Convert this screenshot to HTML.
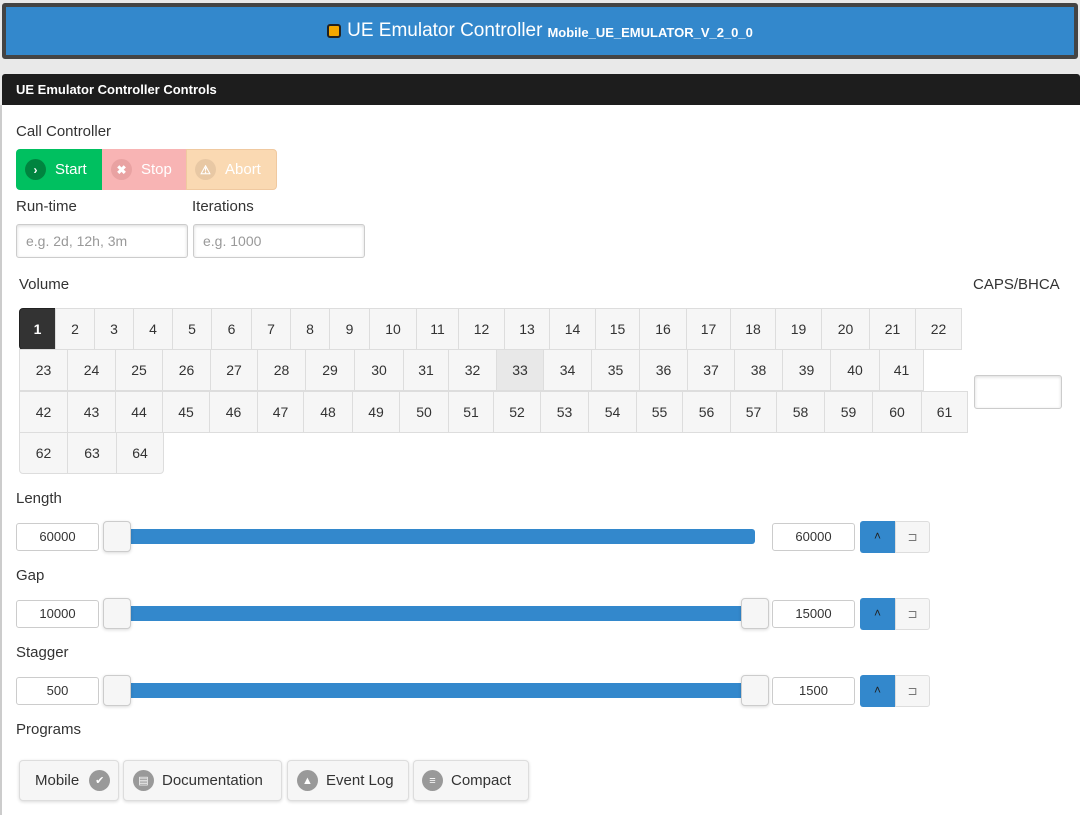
<!DOCTYPE html>
<html><head><meta charset="utf-8"><style>
*{box-sizing:border-box;margin:0;padding:0}
body{width:1080px;height:815px;overflow:hidden;background:#e9e9e9;font-family:"Liberation Sans",sans-serif;color:#333;position:relative}
.a{position:absolute}
.hdr{left:2px;top:3px;width:1076px;height:56px;background:#3388cc;border:4px solid #444;border-radius:3px;color:#fff;display:flex;align-items:center;justify-content:center;font-size:19px}
.hdr small{font-size:13px;font-weight:bold;margin-left:5px;margin-top:3px}
.sq{display:inline-block;width:14px;height:14px;background:#f5a800;border:2px solid #222;border-radius:3px;margin-right:6px}
.ph{left:2px;top:74px;width:1078px;height:31px;background:#1d1d1d;border-radius:3px 3px 0 0;color:#fff;font-weight:bold;font-size:13px;line-height:31px;padding-left:14px}
.body{left:2px;top:105px;width:1078px;height:710px;background:#fff}
.lbl{font-size:15px;color:#333}
.in{background:#fff;border:1px solid #ccc;border-radius:3px;box-shadow:inset 0 1px 3px rgba(0,0,0,.15);font-size:14px;color:#999;padding-left:9px;line-height:32px}
.cb{font-size:15px;color:#fff;height:41px;top:149px;display:flex;align-items:center}
.ic{display:flex;align-items:center;justify-content:center;width:21px;height:21px;border-radius:50%;font-size:12px;font-weight:bold;margin-right:9px}
.c{position:absolute;background:#f6f6f6;border:1px solid #ddd;font-size:14px;text-align:center;height:42px;line-height:40px;color:#333}
.num{background:#fff;border:1px solid #ccc;border-radius:3px;text-align:center;font-size:13px;height:28px;line-height:26px;color:#333}
.th{width:28px;height:31px;background:#f6f6f6;border:1px solid #ccc;border-radius:4px;box-shadow:0 1px 3px rgba(0,0,0,.15)}
.tr{height:15px;background:#3388cc;border-radius:3px}
.b1{width:35px;height:32px;background:#3388cc;border-radius:3px 0 0 3px;color:#222;text-align:center;line-height:30px;font-size:12px}
.b2{width:35px;height:32px;background:#f6f6f6;border:1px solid #ddd;border-radius:0 3px 3px 0;color:#777;text-align:center;line-height:30px;font-size:12px}
.pb{top:760px;height:41px;background:#f6f6f6;border:1px solid #ddd;border-radius:4px;box-shadow:0 1px 3px rgba(0,0,0,.15);font-size:15px;color:#333;display:flex;align-items:center}
.gi{display:flex;align-items:center;justify-content:center;width:21px;height:21px;border-radius:50%;background:#999;color:#fff;font-size:11px;margin-right:8px}
</style></head><body>
<div class="a hdr"><span class="sq"></span>UE Emulator Controller <small>Mobile_UE_EMULATOR_V_2_0_0</small></div>
<div class="a ph">UE Emulator Controller Controls</div>
<div class="a body"></div>
<div class="a" style="left:0;top:105px;width:2px;height:710px;background:#ccc"></div>
<div class="a lbl" style="left:16px;top:123px">Call Controller</div>
<div class="a cb" style="left:16px;width:86px;background:#00c060;border-radius:4px 0 0 4px;padding-left:9px"><span class="ic" style="background:#00843f">&#x203A;</span>Start</div>
<div class="a cb" style="left:102px;width:84px;background:#f8b4b4;padding-left:9px"><span class="ic" style="background:#e9a2a2">&#x2716;</span>Stop</div>
<div class="a cb" style="left:186px;width:91px;background:#fad9b2;border:1px solid #f0c9a0;border-radius:0 4px 4px 0;padding-left:8px"><span class="ic" style="background:#e8c8a4">&#x26A0;</span>Abort</div>
<div class="a lbl" style="left:16px;top:198px">Run-time</div>
<div class="a lbl" style="left:192px;top:198px">Iterations</div>
<div class="a in" style="left:16px;top:224px;width:172px;height:34px">e.g. 2d, 12h, 3m</div>
<div class="a in" style="left:193px;top:224px;width:172px;height:34px">e.g. 1000</div>
<div class="a lbl" style="left:19px;top:276px">Volume</div>
<div class="a lbl" style="left:973px;top:276px">CAPS/BHCA</div>
<div class="a in" style="left:974px;top:375px;width:88px;height:34px"></div>
<div class="a lbl" style="left:16px;top:490px">Length</div>
<div class="a lbl" style="left:16px;top:567px">Gap</div>
<div class="a lbl" style="left:16px;top:644px">Stagger</div>
<div class="a lbl" style="left:16px;top:721px">Programs</div>

<div class="a num" style="left:16px;top:523px;width:83px">60000</div>
<div class="a tr" style="left:128px;top:529px;width:627px"></div>
<div class="a th" style="left:103px;top:521px"></div>
<div class="a num" style="left:772px;top:523px;width:83px">60000</div>
<div class="a b1" style="left:860px;top:521px">&#x2C4;</div><div class="a b2" style="left:895px;top:521px">&#x2290;</div>

<div class="a num" style="left:16px;top:600px;width:83px">10000</div>
<div class="a tr" style="left:128px;top:606px;width:620px"></div>
<div class="a th" style="left:103px;top:598px"></div>
<div class="a th" style="left:741px;top:598px"></div>
<div class="a num" style="left:772px;top:600px;width:83px">15000</div>
<div class="a b1" style="left:860px;top:598px">&#x2C4;</div><div class="a b2" style="left:895px;top:598px">&#x2290;</div>

<div class="a num" style="left:16px;top:677px;width:83px">500</div>
<div class="a tr" style="left:128px;top:683px;width:620px"></div>
<div class="a th" style="left:103px;top:675px"></div>
<div class="a th" style="left:741px;top:675px"></div>
<div class="a num" style="left:772px;top:677px;width:83px">1500</div>
<div class="a b1" style="left:860px;top:675px">&#x2C4;</div><div class="a b2" style="left:895px;top:675px">&#x2290;</div>

<div class="a pb" style="left:19px;width:100px;padding-left:15px">Mobile <span class="gi" style="margin-left:10px;margin-right:0">&#x2714;</span></div>
<div class="a pb" style="left:123px;width:159px;padding-left:9px"><span class="gi">&#x25A4;</span>Documentation</div>
<div class="a pb" style="left:287px;width:122px;padding-left:9px"><span class="gi">&#x25B2;</span>Event Log</div>
<div class="a pb" style="left:413px;width:116px;padding-left:8px"><span class="gi">&#x2261;</span>Compact</div>

<div class="c" style="left:19px;top:308px;width:37px;background:#333;color:#fff;border-color:#222;border-radius:4px 0 0 4px;font-weight:bold">1</div>
<div class="c" style="left:55px;top:308px;width:40px">2</div>
<div class="c" style="left:94px;top:308px;width:40px">3</div>
<div class="c" style="left:133px;top:308px;width:40px">4</div>
<div class="c" style="left:172px;top:308px;width:40px">5</div>
<div class="c" style="left:211px;top:308px;width:41px">6</div>
<div class="c" style="left:251px;top:308px;width:40px">7</div>
<div class="c" style="left:290px;top:308px;width:40px">8</div>
<div class="c" style="left:329px;top:308px;width:41px">9</div>
<div class="c" style="left:369px;top:308px;width:48px">10</div>
<div class="c" style="left:416px;top:308px;width:43px">11</div>
<div class="c" style="left:458px;top:308px;width:47px">12</div>
<div class="c" style="left:504px;top:308px;width:46px">13</div>
<div class="c" style="left:549px;top:308px;width:47px">14</div>
<div class="c" style="left:595px;top:308px;width:45px">15</div>
<div class="c" style="left:639px;top:308px;width:48px">16</div>
<div class="c" style="left:686px;top:308px;width:45px">17</div>
<div class="c" style="left:730px;top:308px;width:46px">18</div>
<div class="c" style="left:775px;top:308px;width:47px">19</div>
<div class="c" style="left:821px;top:308px;width:49px">20</div>
<div class="c" style="left:869px;top:308px;width:47px">21</div>
<div class="c" style="left:915px;top:308px;width:47px">22</div>

<div class="c" style="left:19px;top:349px;width:49px">23</div>
<div class="c" style="left:67px;top:349px;width:49px">24</div>
<div class="c" style="left:115px;top:349px;width:48px">25</div>
<div class="c" style="left:162px;top:349px;width:49px">26</div>
<div class="c" style="left:210px;top:349px;width:48px">27</div>
<div class="c" style="left:257px;top:349px;width:49px">28</div>
<div class="c" style="left:305px;top:349px;width:50px">29</div>
<div class="c" style="left:354px;top:349px;width:50px">30</div>
<div class="c" style="left:403px;top:349px;width:46px">31</div>
<div class="c" style="left:448px;top:349px;width:49px">32</div>
<div class="c" style="left:496px;top:349px;width:48px;background:#e8e8e8">33</div>
<div class="c" style="left:543px;top:349px;width:49px">34</div>
<div class="c" style="left:591px;top:349px;width:49px">35</div>
<div class="c" style="left:639px;top:349px;width:49px">36</div>
<div class="c" style="left:687px;top:349px;width:48px">37</div>
<div class="c" style="left:734px;top:349px;width:49px">38</div>
<div class="c" style="left:782px;top:349px;width:49px">39</div>
<div class="c" style="left:830px;top:349px;width:50px">40</div>
<div class="c" style="left:879px;top:349px;width:45px">41</div>

<div class="c" style="left:19px;top:391px;width:49px">42</div>
<div class="c" style="left:67px;top:391px;width:49px">43</div>
<div class="c" style="left:115px;top:391px;width:48px">44</div>
<div class="c" style="left:162px;top:391px;width:48px">45</div>
<div class="c" style="left:209px;top:391px;width:49px">46</div>
<div class="c" style="left:257px;top:391px;width:47px">47</div>
<div class="c" style="left:303px;top:391px;width:50px">48</div>
<div class="c" style="left:352px;top:391px;width:48px">49</div>
<div class="c" style="left:399px;top:391px;width:50px">50</div>
<div class="c" style="left:448px;top:391px;width:46px">51</div>
<div class="c" style="left:493px;top:391px;width:48px">52</div>
<div class="c" style="left:540px;top:391px;width:49px">53</div>
<div class="c" style="left:588px;top:391px;width:49px">54</div>
<div class="c" style="left:636px;top:391px;width:47px">55</div>
<div class="c" style="left:682px;top:391px;width:49px">56</div>
<div class="c" style="left:730px;top:391px;width:47px">57</div>
<div class="c" style="left:776px;top:391px;width:49px">58</div>
<div class="c" style="left:824px;top:391px;width:49px">59</div>
<div class="c" style="left:872px;top:391px;width:50px">60</div>
<div class="c" style="left:921px;top:391px;width:47px">61</div>

<div class="c" style="left:19px;top:432px;width:49px;border-radius:0 0 0 4px">62</div>
<div class="c" style="left:67px;top:432px;width:50px">63</div>
<div class="c" style="left:116px;top:432px;width:48px;border-radius:0 0 4px 0">64</div>
</body></html>
